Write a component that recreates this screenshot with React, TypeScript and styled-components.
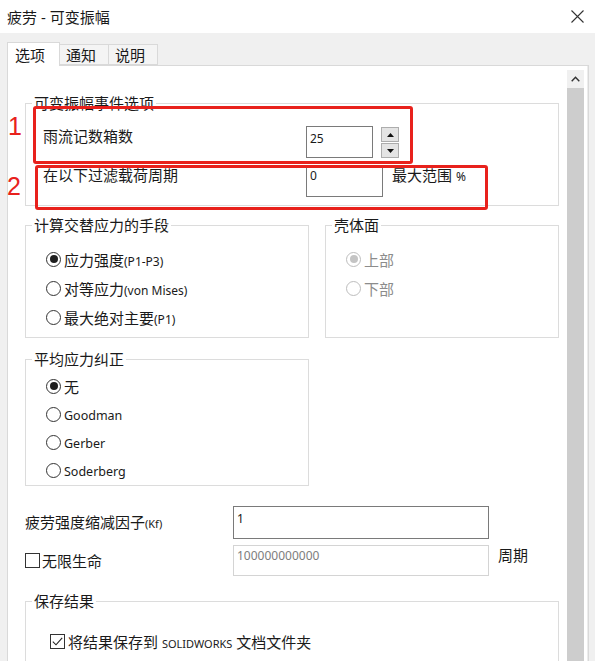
import styled, { createGlobalStyle } from 'styled-components';

const GlobalStyle = createGlobalStyle`
  html, body {
    margin: 0;
    padding: 0;
    background: #fff;
  }
  * {
    box-sizing: border-box;
  }
`;

const Window = styled.div`
  position: relative;
  width: 595px;
  height: 661px;
  overflow: hidden;
  display: flex;
  flex-direction: column;
  background: #f0f0f0;
  font-family: "Noto Sans", "Noto Sans CJK SC", sans-serif;
  font-size: 15px;
  color: #1a1a1a;
`;

const TitleBar = styled.div`
  flex: none;
  height: 33px;
  display: flex;
  align-items: center;
  justify-content: space-between;
  padding: 0 11px 0 7px;
  background: #fff;
  line-height: 20px;
`;

const CloseButton = styled.button`
  display: flex;
  padding: 0;
  border: 0;
  background: none;
`;

const Body = styled.div`
  flex: 1;
  min-height: 0;
  display: flex;
  flex-direction: column;
  padding: 9px 6px 0 7px;
`;

const TabRow = styled.div`
  position: relative;
  z-index: 1;
  display: flex;
  align-items: flex-end;
  height: 23px;
`;

const Tab = styled.div<{ $active?: boolean; $w: number }>`
  width: ${(p) => p.$w}px;
  height: ${(p) => (p.$active ? 24 : 21)}px;
  margin-bottom: ${(p) => (p.$active ? -1 : 0)}px;
  padding-left: ${(p) => (p.$active ? 7 : 6)}px;
  display: flex;
  align-items: center;
  background: ${(p) => (p.$active ? '#fff' : '#f4f4f4')};
  border: 1px solid #d9d9d9;
  border-bottom: ${(p) => (p.$active ? 'none' : '1px solid #d9d9d9')};
  border-left-width: ${(p) => (p.$active ? 1 : 0)}px;
  line-height: 20px;
`;

const Panel = styled.div`
  flex: 1;
  min-height: 0;
  display: flex;
  background: #fff;
  border: 1px solid #d9d9d9;
  border-bottom: none;
`;

const Content = styled.div`
  flex: 1;
  display: flex;
  flex-direction: column;
  padding: 27px 7px 0 17px;
`;

const Scrollbar = styled.div`
  width: 22px;
  display: flex;
  flex-direction: column;
  padding: 4px 3px 0 1px;
  background: #fff;
  border-right: 1px solid #ececec;
`;

const ScrollArrow = styled.div`
  height: 18px;
  display: flex;
  align-items: center;
  justify-content: center;
  background: #f0f0f0;
`;

const ScrollThumb = styled.div`
  flex: 1;
  background: #cdcdcd;
`;

const Group = styled.fieldset`
  margin: 0;
  padding: 0;
  min-width: 0;
  border: 1px solid #dcdcdc;
`;

const Legend = styled.legend`
  margin-left: 6px;
  padding: 0 2px;
  line-height: 20px;
`;

const GroupBody = styled.div<{ $pad: string; $gap: number }>`
  display: flex;
  flex-direction: column;
  gap: ${(p) => p.$gap}px;
  padding: ${(p) => p.$pad};
`;

const GroupGrid = styled.div`
  display: grid;
  grid-template-columns: 284px 1fr;
  column-gap: 16px;
  row-gap: 11px;
  margin-top: 9px;
`;

const FieldRow = styled.div`
  display: flex;
  align-items: flex-start;
  line-height: 20px;
`;

const FieldLabel = styled.div<{ $w: number }>`
  width: ${(p) => p.$w}px;
  flex: none;
  line-height: 20px;
`;

const TextBox = styled.div<{ $w: number; $h: number; $pt: number; $disabled?: boolean }>`
  width: ${(p) => p.$w}px;
  height: ${(p) => p.$h}px;
  flex: none;
  padding: ${(p) => p.$pt}px 3px 0;
  border: 1px solid ${(p) => (p.$disabled ? '#d4d4d4' : '#7a7a7a')};
  background: #fff;
  font-size: 12px;
  line-height: 18px;
  color: ${(p) => (p.$disabled ? '#7d7d7d' : '#1a1a1a')};
`;

const Spinner = styled.div`
  display: flex;
  flex-direction: column;
  margin: 1px 0 0 8px;
`;

const SpinButton = styled.div`
  width: 18px;
  height: 15px;
  display: flex;
  align-items: center;
  justify-content: center;
  background: #e4e4e4;
  border: 1px solid #adadad;
  & + & {
    margin-top: 1px;
  }
`;

const Unit = styled.div`
  margin-left: 9px;
  line-height: 20px;
`;

const Small = styled.span<{ $size?: number }>`
  font-size: ${(p) => p.$size ?? 12}px;
`;

const OptionRow = styled.div<{ $disabled?: boolean }>`
  display: flex;
  align-items: center;
  gap: 3px;
  height: 20px;
  color: ${(p) => (p.$disabled ? '#8c8c8c' : '#1a1a1a')};
`;

const RadioDot = styled.span<{ $checked?: boolean; $disabled?: boolean }>`
  width: 15px;
  height: 15px;
  flex: none;
  display: flex;
  align-items: center;
  justify-content: center;
  border-radius: 50%;
  border: 1px solid ${(p) => (p.$disabled ? '#bdbdbd' : '#333')};
  background: #fff;
  &::after {
    content: '';
    display: ${(p) => (p.$checked ? 'block' : 'none')};
    width: 8px;
    height: 8px;
    border-radius: 50%;
    background: ${(p) => (p.$disabled ? '#c4c4c4' : '#1f1f1f')};
  }
`;

const CheckBox = styled.span`
  width: 15px;
  height: 15px;
  flex: none;
  display: flex;
  align-items: center;
  justify-content: center;
  border: 1px solid #333;
  background: #fff;
`;

const FormRows = styled.div`
  display: flex;
  flex-direction: column;
  gap: 6px;
  margin-top: 20px;
`;

const FormRow = styled.div<{ $align: string }>`
  display: flex;
  align-items: ${(p) => p.$align};
  line-height: 20px;
`;

const CheckLabel = styled.div<{ $w: number; $h: number }>`
  width: ${(p) => p.$w}px;
  height: ${(p) => p.$h}px;
  flex: none;
  display: flex;
  align-items: center;
  gap: 2px;
`;

const SaveGroup = styled(Group)`
  margin-top: 15px;
`;

const MarkFrame = styled.div<{ $x: number; $y: number; $w: number; $h: number }>`
  position: absolute;
  left: ${(p) => p.$x}px;
  top: ${(p) => p.$y}px;
  width: ${(p) => p.$w}px;
  height: ${(p) => p.$h}px;
  border: 3px solid #e8211c;
  border-radius: 3px;
  pointer-events: none;
`;

const MarkNumber = styled.div<{ $x: number; $y: number }>`
  position: absolute;
  left: ${(p) => p.$x}px;
  top: ${(p) => p.$y}px;
  font-family: "Liberation Sans", sans-serif;
  font-size: 25px;
  line-height: 25px;
  color: #e8211c;
`;

function Radio({ label, checked, disabled }: { label: React.ReactNode; checked?: boolean; disabled?: boolean }) {
  return (
    <OptionRow $disabled={disabled}>
      <RadioDot $checked={checked} $disabled={disabled} />
      <span>{label}</span>
    </OptionRow>
  );
}

function App() {
  return (
    <Window>
      <GlobalStyle />
      <TitleBar>
        <span>疲劳 - 可变振幅</span>
        <CloseButton aria-label="close">
          <svg width="13" height="13" viewBox="0 0 13 13">
            <path d="M0.5 0.5 L12.5 12.5 M12.5 0.5 L0.5 12.5" stroke="#333" strokeWidth="1.1" />
          </svg>
        </CloseButton>
      </TitleBar>

      <Body>
        <TabRow>
          <Tab $active $w={53}>选项</Tab>
          <Tab $w={49}>通知</Tab>
          <Tab $w={49}>说明</Tab>
        </TabRow>

        <Panel>
          <Content>
            <Group>
              <Legend>可变振幅事件选项</Legend>
              <GroupBody $pad="13px 0 8px 17px" $gap={7}>
                <FieldRow>
                  <FieldLabel $w={263}>雨流记数箱数</FieldLabel>
                  <TextBox $w={67} $h={32} $pt={3}>25</TextBox>
                  <Spinner>
                    <SpinButton>
                      <svg width="7" height="4" viewBox="0 0 7 4">
                        <path d="M0 4 L3.5 0 L7 4 Z" fill="#111" />
                      </svg>
                    </SpinButton>
                    <SpinButton>
                      <svg width="7" height="4" viewBox="0 0 7 4">
                        <path d="M0 0 L3.5 4 L7 0 Z" fill="#111" />
                      </svg>
                    </SpinButton>
                  </Spinner>
                </FieldRow>
                <FieldRow>
                  <FieldLabel $w={263}>在以下过滤载荷周期</FieldLabel>
                  <TextBox $w={77} $h={32} $pt={1}>0</TextBox>
                  <Unit>
                    最大范围 <Small>%</Small>
                  </Unit>
                </FieldRow>
              </GroupBody>
            </Group>

            <GroupGrid>
              <Group>
                <Legend>计算交替应力的手段</Legend>
                <GroupBody $pad="14px 0 10px 20px" $gap={9}>
                  <Radio checked label={<>应力强度<Small>(P1-P3)</Small></>} />
                  <Radio label={<>对等应力<Small>(von Mises)</Small></>} />
                  <Radio label={<>最大绝对主要<Small>(P1)</Small></>} />
                </GroupBody>
              </Group>
              <Group>
                <Legend>壳体面</Legend>
                <GroupBody $pad="14px 0 10px 20px" $gap={9}>
                  <Radio checked disabled label="上部" />
                  <Radio disabled label="下部" />
                </GroupBody>
              </Group>
              <Group>
                <Legend>平均应力纠正</Legend>
                <GroupBody $pad="7px 0 5px 20px" $gap={8}>
                  <Radio checked label="无" />
                  <Radio label={<Small $size={12.5}>Goodman</Small>} />
                  <Radio label={<Small $size={12.5}>Gerber</Small>} />
                  <Radio label={<Small $size={12.5}>Soderberg</Small>} />
                </GroupBody>
              </Group>
            </GroupGrid>

            <FormRows>
              <FormRow $align="center">
                <FieldLabel $w={208}>
                  疲劳强度缩减因子<Small $size={11}>(Kf)</Small>
                </FieldLabel>
                <TextBox $w={256} $h={33} $pt={3}>1</TextBox>
              </FormRow>
              <FormRow $align="flex-start">
                <CheckLabel $w={208} $h={31}>
                  <CheckBox />
                  <span>无限生命</span>
                </CheckLabel>
                <TextBox $w={256} $h={31} $pt={1} $disabled>100000000000</TextBox>
                <Unit>周期</Unit>
              </FormRow>
            </FormRows>

            <SaveGroup>
              <Legend>保存结果</Legend>
              <GroupBody $pad="20px 0 20px 24px" $gap={8}>
                <OptionRow>
                  <CheckBox>
                    <svg width="11" height="9" viewBox="0 0 11 9">
                      <path d="M0.8 4.6 L4 7.8 L10.2 0.8" fill="none" stroke="#222" strokeWidth="1.1" />
                    </svg>
                  </CheckBox>
                  <span>
                    将结果保存到 <Small $size={11}>SOLIDWORKS</Small> 文档文件夹
                  </span>
                </OptionRow>
              </GroupBody>
            </SaveGroup>
          </Content>

          <Scrollbar>
            <ScrollArrow>
              <svg width="9" height="6" viewBox="0 0 9 6">
                <path d="M0.7 5.3 L4.5 1.3 L8.3 5.3" fill="none" stroke="#333" strokeWidth="1.4" />
              </svg>
            </ScrollArrow>
            <ScrollThumb />
          </Scrollbar>
        </Panel>
      </Body>

      <MarkFrame $x={33} $y={106} $w={380} $h={58} />
      <MarkFrame $x={35} $y={165} $w={453} $h={45} />
      <MarkNumber $x={8} $y={114}>1</MarkNumber>
      <MarkNumber $x={7} $y={174}>2</MarkNumber>
    </Window>
  );
}

export default App;
